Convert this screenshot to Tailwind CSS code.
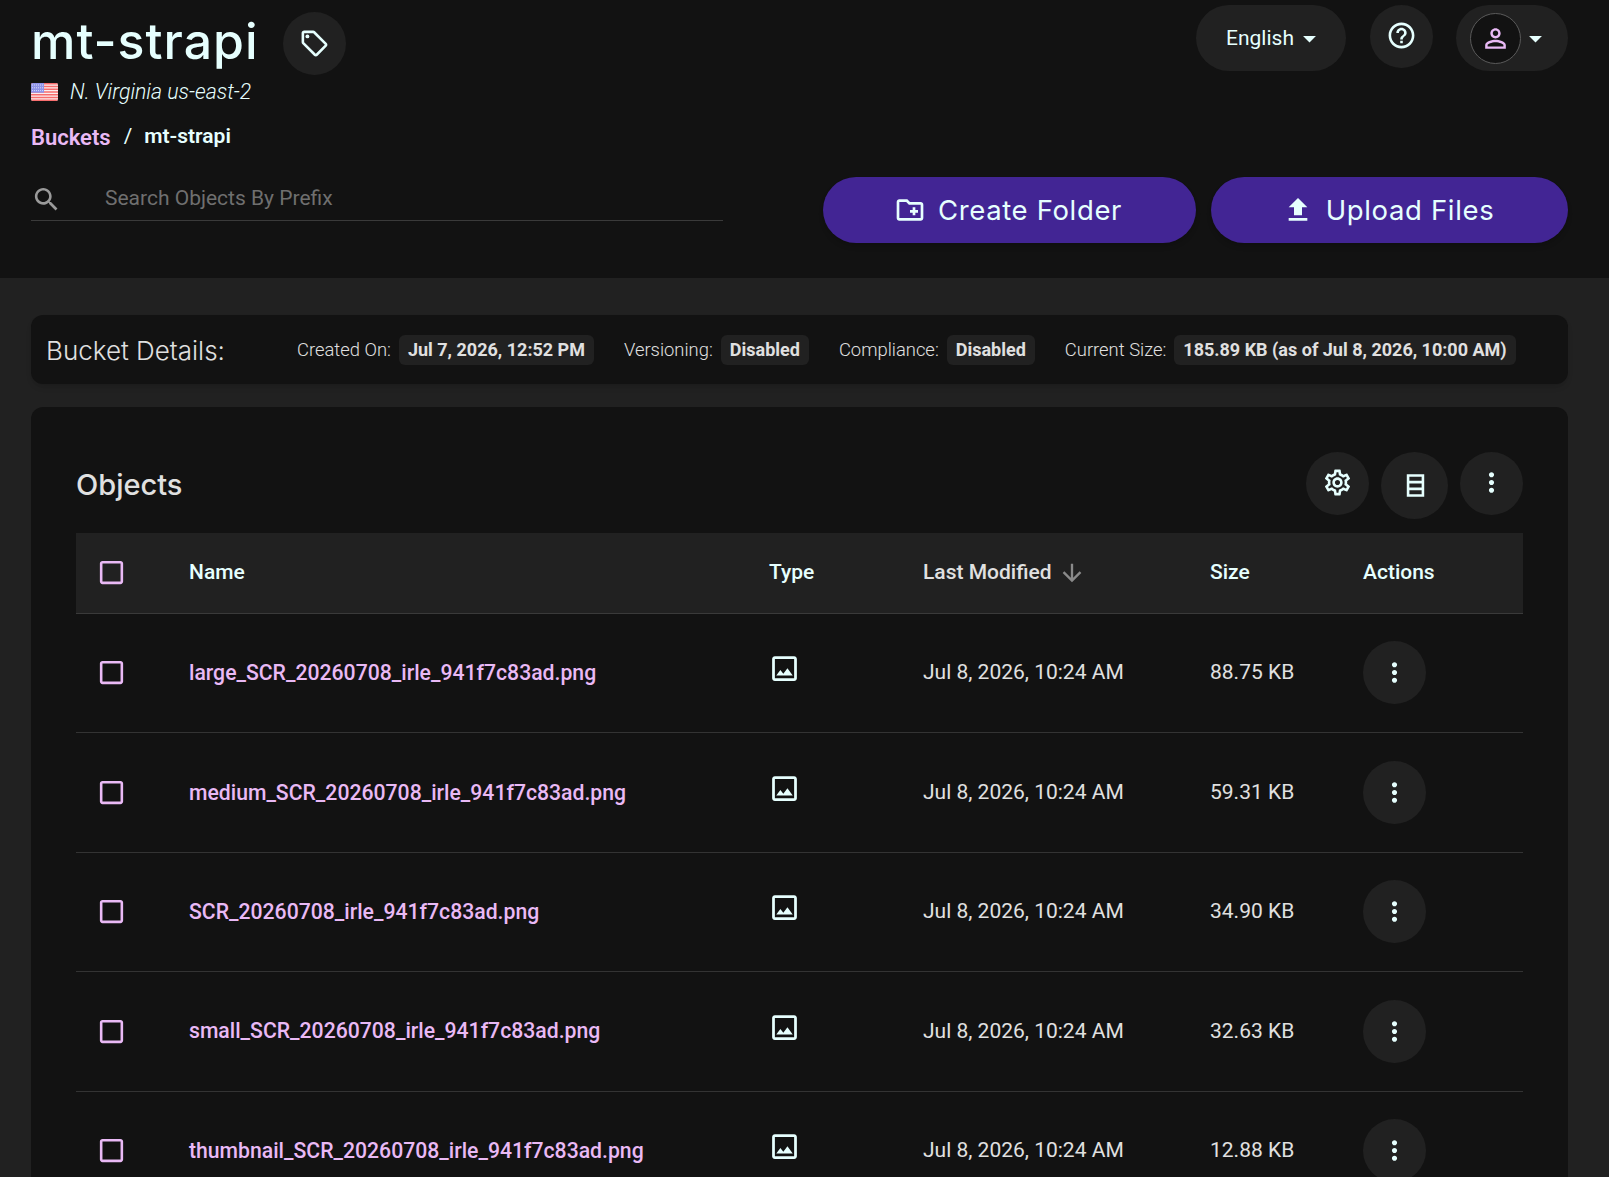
<!DOCTYPE html>
<html lang="en">
<head>
    <meta charset="UTF-8">
    <title>mt-strapi - Buckets</title>
    <script src="https://cdn.jsdelivr.net/npm/@tailwindcss/browser@4"></script>
</head>
<body class="h-[1177px] overflow-hidden bg-[#212121] font-['Roboto',sans-serif] text-[#e6fffe]">
    <!-- Page header -->
    <header class="flex h-[278px] justify-between bg-[#121212] pl-[31px] pr-[41px]">
        <div class="w-[692px]">
            <div class="flex h-[75px] items-start pt-[12px]">
                <h1 class="mt-[-3px] font-['Inter',sans-serif] text-[50px] leading-[64px] font-medium tracking-[1px]">mt-strapi</h1>
                <button class="ml-[24px] flex h-[63px] w-[63px] items-center justify-center rounded-full bg-[#212121]">
                    <svg class="h-[31px] w-[31px] fill-current" viewBox="0 0 24 24"><path d="m21.41 11.58-9-9C12.05 2.22 11.55 2 11 2H4c-1.1 0-2 .9-2 2v7c0 .55.22 1.05.59 1.42l9 9c.36.36.86.58 1.41.58s1.05-.22 1.41-.59l7-7c.37-.36.59-.86.59-1.41s-.23-1.06-.59-1.42zM13 20.01 4 11V4h7v-.01l9 9-7 7.02z"/><circle cx="6.5" cy="6.5" r="1.5"/></svg>
                </button>
            </div>
            <div class="mt-[3px] flex h-[28px] items-center">
                <svg class="h-[18px] w-[27px] rounded-[2px]" viewBox="0 0 27 18">
                    <rect width="27" height="18" fill="#fdeeee"/>
                    <path d="M0 .7h27M0 3.5h27M0 6.2h27M0 9h27M0 11.8h27M0 14.5h27M0 17.3h27" stroke="#f76d6d" stroke-width="1.4"/>
                    <rect width="13" height="9.7" fill="#8f93ea"/>
                    <path d="M1 2h11M1 4.8h11M1 7.6h11" stroke="#d8daf8" stroke-width="1" stroke-dasharray="1 1"/>
                </svg>
                <span class="ml-[12px] text-[21.3px] font-light italic">N. Virginia us-east-2</span>
            </div>
            <nav class="mt-[16px] flex h-[30px] items-center font-semibold">
                <a class="text-[22px] text-[#e9b9f5]">Buckets</a>
                <span class="ml-[13px] text-[20.8px] font-normal">/</span>
                <span class="ml-[12px] text-[21px]">mt-strapi</span>
            </nav>
            <div class="mt-[28px] flex h-[41px] items-center border-b border-[#3a3a3a] pb-[2px]">
                <svg class="h-[31px] w-[31px] fill-[#9a9a9a]" viewBox="0 0 24 24"><path d="M15.5 14h-.79l-.28-.27C15.41 12.59 16 11.11 16 9.5 16 5.91 13.09 3 9.5 3S3 5.91 3 9.5 5.91 16 9.5 16c1.61 0 3.09-.59 4.23-1.57l.27.28v.79l5 4.99L20.49 19l-4.99-5zm-6 0C7.01 14 5 11.99 5 9.5S7.01 5 9.5 5 14 7.01 14 9.5 11.99 14 9.5 14z"/></svg>
                <span class="ml-[43px] text-[21px] text-[#6f6f6f]">Search Objects By Prefix</span>
            </div>
        </div>
        <div class="flex flex-col items-end justify-between pt-[5px] pb-[35px]">
            <div class="flex items-start">
                <button class="flex h-[66px] w-[150px] items-center justify-center rounded-full bg-[#212121] pl-[9px] text-[21px]">
                    <span class="mt-[2px]">English</span>
                    <svg class="h-[31px] w-[31px] fill-current" viewBox="0 0 24 24"><path d="m7 10 5 5 5-5z"/></svg>
                </button>
                <button class="ml-[24px] flex h-[63px] w-[63px] items-center justify-center rounded-full bg-[#212121]">
                    <svg class="mb-[2px] h-[31px] w-[31px] fill-current" viewBox="0 0 24 24"><path d="M11 18h2v-2h-2v2zm1-16C6.48 2 2 6.48 2 12s4.48 10 10 10 10-4.48 10-10S17.52 2 12 2zm0 18c-4.41 0-8-3.59-8-8s3.59-8 8-8 8 3.59 8 8-3.59 8-8 8zm0-14c-2.21 0-4 1.79-4 4h2c0-1.1.9-2 2-2s2 .9 2 2c0 2-3 1.75-3 5h2c0-2.25 3-2.5 3-5 0-2.21-1.79-4-4-4z"/></svg>
                </button>
                <button class="ml-[23px] flex h-[66px] w-[112px] items-center rounded-full bg-[#212121] pl-[14px]">
                    <span class="flex h-[51px] w-[51px] items-center justify-center rounded-full border border-[#5a5a5a] bg-[#121212]">
                        <svg class="h-[31px] w-[31px] fill-[#e9b9f5]" viewBox="0 0 24 24"><path d="M12 5.9c1.16 0 2.1.94 2.1 2.1s-.94 2.1-2.1 2.1S9.9 9.16 9.9 8s.94-2.1 2.1-2.1m0 9c2.97 0 6.1 1.46 6.1 2.1v1.1H5.9V17c0-.64 3.13-2.1 6.1-2.1M12 4C9.79 4 8 5.79 8 8s1.79 4 4 4 4-1.79 4-4-1.79-4-4-4zm0 9c-2.67 0-8 1.34-8 4v3h16v-3c0-2.66-5.33-4-8-4z"/></svg>
                    </span>
                    <svg class="-ml-[1px] h-[31px] w-[31px] fill-current" viewBox="0 0 24 24"><path d="m7 10 5 5 5-5z"/></svg>
                </button>
            </div>
            <div class="flex gap-[15px]">
                <button class="flex h-[66px] w-[373px] items-center justify-center gap-[12px] rounded-full bg-[#422594] pr-[3px] font-['Inter',sans-serif] text-[27.5px] tracking-[0.65px] shadow-md">
                    <svg class="h-[32px] w-[32px] fill-current" viewBox="0 0 24 24"><path d="M20 6h-8l-2-2H4c-1.11 0-1.99.89-1.99 2L2 18c0 1.11.89 2 2 2h16c1.11 0 2-.89 2-2V8c0-1.11-.89-2-2-2zm0 12H4V6h5.17l2 2H20v10zm-8-4h2v2h2v-2h2v-2h-2v-2h-2v2h-2v2z"/></svg>
                    <span class="mt-[2px]">Create Folder</span>
                </button>
                <button class="flex h-[66px] w-[357px] items-center justify-center gap-[12px] rounded-full bg-[#422594] pr-[3px] font-['Inter',sans-serif] text-[27.5px] tracking-[0.65px] shadow-md">
                    <svg class="h-[32px] w-[32px] fill-current" viewBox="0 0 24 24"><path d="M5 20h14v-2H5v2zm0-10h4v6h6v-6h4l-7-7-7 7z"/></svg>
                    <span class="mt-[2px]">Upload Files</span>
                </button>
            </div>
        </div>
    </header>

    <main class="pt-[37px] pr-[41px] pl-[31px]">
        <!-- Bucket details -->
        <section class="flex h-[69px] items-center rounded-[12px] bg-[#121212] pl-[15px] text-[18px] text-[#e0e0e0] shadow-md">
            <h2 class="mt-[2px] w-[251px] font-['Inter',sans-serif] text-[26px] font-light">Bucket Details:</h2>
            <span class="text-[18.4px] font-light">Created On:</span>
            <span class="ml-[8px] flex h-[30px] items-center rounded-[6px] bg-[#212121] px-[9px] font-bold">Jul 7, 2026, 12:52 PM</span>
            <span class="ml-[30px] text-[18.4px] font-light">Versioning:</span>
            <span class="ml-[8px] flex h-[30px] items-center rounded-[6px] bg-[#212121] px-[9px] font-bold">Disabled</span>
            <span class="ml-[30px] text-[18.4px] font-light">Compliance:</span>
            <span class="ml-[8px] flex h-[30px] items-center rounded-[6px] bg-[#212121] px-[9px] font-bold">Disabled</span>
            <span class="ml-[30px] text-[18.4px] font-light">Current Size:</span>
            <span class="ml-[8px] flex h-[30px] items-center rounded-[6px] bg-[#212121] px-[9px] font-bold">185.89 KB (as of Jul 8, 2026, 10:00 AM)</span>
        </section>

        <!-- Objects table -->
        <section class="mt-[23px] h-[800px] rounded-t-[12px] bg-[#121212] px-[45px] pt-[45px]">
            <div class="flex h-[81px] items-start justify-between">
                <h2 class="mt-[13px] font-['Inter',sans-serif] text-[29px] leading-[40px] font-medium text-[#e0e0e0]">Objects</h2>
                <div class="flex items-start gap-[12px]">
                    <button class="flex h-[63px] w-[63px] items-center justify-center rounded-full bg-[#212121]">
                        <svg class="mb-[2px] h-[31px] w-[31px] fill-current" viewBox="0 0 24 24"><path d="M19.43 12.98c.04-.32.07-.64.07-.98 0-.34-.03-.66-.07-.98l2.11-1.65c.19-.15.24-.42.12-.64l-2-3.46c-.09-.16-.26-.25-.44-.25-.06 0-.12.01-.17.03l-2.49 1c-.52-.4-1.08-.73-1.69-.98l-.38-2.65C14.46 2.18 14.25 2 14 2h-4c-.25 0-.46.18-.49.42l-.38 2.65c-.61.25-1.17.59-1.69.98l-2.49-1c-.06-.02-.12-.03-.18-.03-.17 0-.34.09-.43.25l-2 3.46c-.13.22-.07.49.12.64l2.11 1.65c-.04.32-.07.65-.07.98 0 .33.03.66.07.98l-2.11 1.65c-.19.15-.24.42-.12.64l2 3.46c.09.16.26.25.44.25.06 0 .12-.01.17-.03l2.49-1c.52.4 1.08.73 1.69.98l.38 2.65c.03.24.24.42.49.42h4c.25 0 .46-.18.49-.42l.38-2.65c.61-.25 1.17-.59 1.69-.98l2.49 1c.06.02.12.03.18.03.17 0 .34-.09.43-.25l2-3.46c.12-.22.07-.49-.12-.64l-2.11-1.65zm-1.98-1.71c.04.31.05.52.05.73 0 .21-.02.43-.05.73l-.14 1.13.89.7 1.08.84-.7 1.21-1.27-.51-1.04-.42-.9.68c-.43.32-.84.56-1.25.73l-1.06.43-.16 1.13-.2 1.35h-1.4l-.19-1.35-.16-1.13-1.06-.43c-.43-.18-.83-.41-1.23-.71l-.91-.7-1.06.43-1.27.51-.7-1.21 1.08-.84.89-.7-.14-1.13c-.03-.31-.05-.54-.05-.74s.02-.43.05-.73l.14-1.13-.89-.7-1.08-.84.7-1.21 1.27.51 1.04.42.9-.68c.43-.32.84-.56 1.25-.73l1.06-.43.16-1.13.2-1.35h1.39l.19 1.35.16 1.13 1.06.43c.43.18.83.41 1.23.71l.91.7 1.06-.43 1.27-.51.7 1.21-1.07.85-.89.7.14 1.13zM12 8c-2.21 0-4 1.79-4 4s1.79 4 4 4 4-1.79 4-4-1.79-4-4-4zm0 6c-1.1 0-2-.9-2-2s.9-2 2-2 2 .9 2 2-.9 2-2 2z"/></svg>
                    </button>
                    <button class="flex h-[67px] w-[67px] items-center justify-center rounded-full bg-[#212121]">
                        <svg class="ml-[2px] h-[31px] w-[31px] fill-none stroke-current stroke-2" viewBox="0 0 24 24"><path d="M6.25 4.2h11.5v15.6H6.25zM6.25 9.4h11.5M6.25 14.6h11.5"/></svg>
                    </button>
                    <button class="flex h-[63px] w-[63px] items-center justify-center rounded-full bg-[#212121]">
                        <svg class="mb-[2px] h-[31px] w-[31px] fill-current" viewBox="0 0 24 24"><path d="M12 8c1.1 0 2-.9 2-2s-.9-2-2-2-2 .9-2 2 .9 2 2 2zm0 2c-1.1 0-2 .9-2 2s.9 2 2 2 2-.9 2-2-.9-2-2-2zm0 6c-1.1 0-2 .9-2 2s.9 2 2 2 2-.9 2-2-.9-2-2-2z"/></svg>
                    </button>
                </div>
            </div>

            <div class="grid h-[81px] grid-cols-[113px_580px_154px_287px_153px_1fr] items-center border-b border-[#3a3a3a] bg-[#212121] text-[21px] font-medium">
                <svg class="mb-[2px] ml-[20px] h-[31px] w-[31px] fill-[#e9b9f5]" viewBox="0 0 24 24"><path d="M19 5v14H5V5h14m0-2H5c-1.1 0-2 .9-2 2v14c0 1.1.9 2 2 2h14c1.1 0 2-.9 2-2V5c0-1.1-.9-2-2-2z"/></svg>
                <span>Name</span>
                <span>Type</span>
                <span class="flex items-center gap-[6px] text-[#e0e0e0]">Last Modified
                    <svg class="h-[28px] w-[28px] fill-[#8a8a8a]" viewBox="0 0 24 24"><path d="M20 12l-1.41-1.41L13 16.17V4h-2v12.17l-5.58-5.59L4 12l8 8 8-8z"/></svg>
                </span>
                <span>Size</span>
                <span>Actions</span>
            </div>

            <!-- rows -->
            <div class="grid h-[119.4px] grid-cols-[113px_580px_154px_287px_153px_1fr] items-center border-b border-[#333333] pb-[1px] text-[21px]">
                <svg class="ml-[20px] h-[31px] w-[31px] fill-[#e9b9f5]" viewBox="0 0 24 24"><path d="M19 5v14H5V5h14m0-2H5c-1.1 0-2 .9-2 2v14c0 1.1.9 2 2 2h14c1.1 0 2-.9 2-2V5c0-1.1-.9-2-2-2z"/></svg>
                <a class="text-[21.2px] font-medium text-[#e9b9f5]">large_SCR_20260708_irle_941f7c83ad.png</a>
                <svg class="mb-[8px] -ml-[1px] h-[33px] w-[33px] fill-current" viewBox="0 0 24 24"><path d="M19 5v14H5V5h14m0-2H5c-1.1 0-2 .9-2 2v14c0 1.1.9 2 2 2h14c1.1 0 2-.9 2-2V5c0-1.1-.9-2-2-2zm-4.86 8.86l-3 3.87L9 13.14 6 17h12l-3.86-5.14z"/></svg>
                <span class="text-[#e0e0e0]">Jul 8, 2026, 10:24 AM</span>
                <span class="text-[#e0e0e0]">88.75 KB</span>
                <button class="flex h-[63px] w-[63px] items-center justify-center rounded-full bg-[#212121]">
                    <svg class="h-[31px] w-[31px] fill-current" viewBox="0 0 24 24"><path d="M12 8c1.1 0 2-.9 2-2s-.9-2-2-2-2 .9-2 2 .9 2 2 2zm0 2c-1.1 0-2 .9-2 2s.9 2 2 2 2-.9 2-2-.9-2-2-2zm0 6c-1.1 0-2 .9-2 2s.9 2 2 2 2-.9 2-2-.9-2-2-2z"/></svg>
                </button>
            </div>
            <div class="grid h-[119.4px] grid-cols-[113px_580px_154px_287px_153px_1fr] items-center border-b border-[#333333] text-[21px]">
                <svg class="ml-[20px] h-[31px] w-[31px] fill-[#e9b9f5]" viewBox="0 0 24 24"><path d="M19 5v14H5V5h14m0-2H5c-1.1 0-2 .9-2 2v14c0 1.1.9 2 2 2h14c1.1 0 2-.9 2-2V5c0-1.1-.9-2-2-2z"/></svg>
                <a class="text-[21.2px] font-medium text-[#e9b9f5]">medium_SCR_20260708_irle_941f7c83ad.png</a>
                <svg class="mb-[8px] -ml-[1px] h-[33px] w-[33px] fill-current" viewBox="0 0 24 24"><path d="M19 5v14H5V5h14m0-2H5c-1.1 0-2 .9-2 2v14c0 1.1.9 2 2 2h14c1.1 0 2-.9 2-2V5c0-1.1-.9-2-2-2zm-4.86 8.86l-3 3.87L9 13.14 6 17h12l-3.86-5.14z"/></svg>
                <span class="text-[#e0e0e0]">Jul 8, 2026, 10:24 AM</span>
                <span class="text-[#e0e0e0]">59.31 KB</span>
                <button class="flex h-[63px] w-[63px] items-center justify-center rounded-full bg-[#212121]">
                    <svg class="h-[31px] w-[31px] fill-current" viewBox="0 0 24 24"><path d="M12 8c1.1 0 2-.9 2-2s-.9-2-2-2-2 .9-2 2 .9 2 2 2zm0 2c-1.1 0-2 .9-2 2s.9 2 2 2 2-.9 2-2-.9-2-2-2zm0 6c-1.1 0-2 .9-2 2s.9 2 2 2 2-.9 2-2-.9-2-2-2z"/></svg>
                </button>
            </div>
            <div class="grid h-[119.4px] grid-cols-[113px_580px_154px_287px_153px_1fr] items-center border-b border-[#333333] text-[21px]">
                <svg class="ml-[20px] h-[31px] w-[31px] fill-[#e9b9f5]" viewBox="0 0 24 24"><path d="M19 5v14H5V5h14m0-2H5c-1.1 0-2 .9-2 2v14c0 1.1.9 2 2 2h14c1.1 0 2-.9 2-2V5c0-1.1-.9-2-2-2z"/></svg>
                <a class="text-[21.2px] font-medium text-[#e9b9f5]">SCR_20260708_irle_941f7c83ad.png</a>
                <svg class="mb-[8px] -ml-[1px] h-[33px] w-[33px] fill-current" viewBox="0 0 24 24"><path d="M19 5v14H5V5h14m0-2H5c-1.1 0-2 .9-2 2v14c0 1.1.9 2 2 2h14c1.1 0 2-.9 2-2V5c0-1.1-.9-2-2-2zm-4.86 8.86l-3 3.87L9 13.14 6 17h12l-3.86-5.14z"/></svg>
                <span class="text-[#e0e0e0]">Jul 8, 2026, 10:24 AM</span>
                <span class="text-[#e0e0e0]">34.90 KB</span>
                <button class="flex h-[63px] w-[63px] items-center justify-center rounded-full bg-[#212121]">
                    <svg class="h-[31px] w-[31px] fill-current" viewBox="0 0 24 24"><path d="M12 8c1.1 0 2-.9 2-2s-.9-2-2-2-2 .9-2 2 .9 2 2 2zm0 2c-1.1 0-2 .9-2 2s.9 2 2 2 2-.9 2-2-.9-2-2-2zm0 6c-1.1 0-2 .9-2 2s.9 2 2 2 2-.9 2-2-.9-2-2-2z"/></svg>
                </button>
            </div>
            <div class="grid h-[119.4px] grid-cols-[113px_580px_154px_287px_153px_1fr] items-center border-b border-[#333333] text-[21px]">
                <svg class="ml-[20px] h-[31px] w-[31px] fill-[#e9b9f5]" viewBox="0 0 24 24"><path d="M19 5v14H5V5h14m0-2H5c-1.1 0-2 .9-2 2v14c0 1.1.9 2 2 2h14c1.1 0 2-.9 2-2V5c0-1.1-.9-2-2-2z"/></svg>
                <a class="text-[21.2px] font-medium text-[#e9b9f5]">small_SCR_20260708_irle_941f7c83ad.png</a>
                <svg class="mb-[8px] -ml-[1px] h-[33px] w-[33px] fill-current" viewBox="0 0 24 24"><path d="M19 5v14H5V5h14m0-2H5c-1.1 0-2 .9-2 2v14c0 1.1.9 2 2 2h14c1.1 0 2-.9 2-2V5c0-1.1-.9-2-2-2zm-4.86 8.86l-3 3.87L9 13.14 6 17h12l-3.86-5.14z"/></svg>
                <span class="text-[#e0e0e0]">Jul 8, 2026, 10:24 AM</span>
                <span class="text-[#e0e0e0]">32.63 KB</span>
                <button class="flex h-[63px] w-[63px] items-center justify-center rounded-full bg-[#212121]">
                    <svg class="h-[31px] w-[31px] fill-current" viewBox="0 0 24 24"><path d="M12 8c1.1 0 2-.9 2-2s-.9-2-2-2-2 .9-2 2 .9 2 2 2zm0 2c-1.1 0-2 .9-2 2s.9 2 2 2 2-.9 2-2-.9-2-2-2zm0 6c-1.1 0-2 .9-2 2s.9 2 2 2 2-.9 2-2-.9-2-2-2z"/></svg>
                </button>
            </div>
            <div class="grid h-[119.4px] grid-cols-[113px_580px_154px_287px_153px_1fr] items-center pb-[1px] text-[21px]">
                <svg class="ml-[20px] h-[31px] w-[31px] fill-[#e9b9f5]" viewBox="0 0 24 24"><path d="M19 5v14H5V5h14m0-2H5c-1.1 0-2 .9-2 2v14c0 1.1.9 2 2 2h14c1.1 0 2-.9 2-2V5c0-1.1-.9-2-2-2z"/></svg>
                <a class="text-[21.2px] font-medium text-[#e9b9f5]">thumbnail_SCR_20260708_irle_941f7c83ad.png</a>
                <svg class="mb-[8px] -ml-[1px] h-[33px] w-[33px] fill-current" viewBox="0 0 24 24"><path d="M19 5v14H5V5h14m0-2H5c-1.1 0-2 .9-2 2v14c0 1.1.9 2 2 2h14c1.1 0 2-.9 2-2V5c0-1.1-.9-2-2-2zm-4.86 8.86l-3 3.87L9 13.14 6 17h12l-3.86-5.14z"/></svg>
                <span class="text-[#e0e0e0]">Jul 8, 2026, 10:24 AM</span>
                <span class="text-[#e0e0e0]">12.88 KB</span>
                <button class="flex h-[63px] w-[63px] items-center justify-center rounded-full bg-[#212121]">
                    <svg class="h-[31px] w-[31px] fill-current" viewBox="0 0 24 24"><path d="M12 8c1.1 0 2-.9 2-2s-.9-2-2-2-2 .9-2 2 .9 2 2 2zm0 2c-1.1 0-2 .9-2 2s.9 2 2 2 2-.9 2-2-.9-2-2-2zm0 6c-1.1 0-2 .9-2 2s.9 2 2 2 2-.9 2-2-.9-2-2-2z"/></svg>
                </button>
            </div>
        </section>
    </main>
</body>
</html>
